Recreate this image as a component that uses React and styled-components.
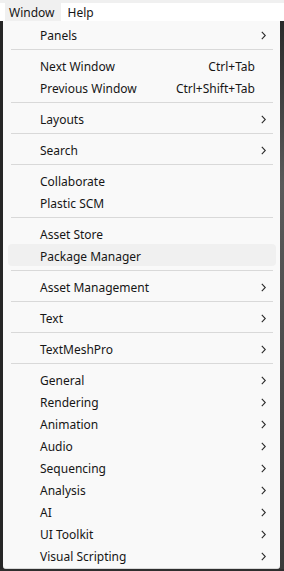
import React from 'react'
import styled, {createGlobalStyle, css} from 'styled-components'

const GlobalStyle = createGlobalStyle`
    html, body {
        margin: 0;
        padding: 0;
        background: #2e2e2e;
    }
    body {
        font-family: "Noto Sans", "Liberation Sans", sans-serif;
        font-size: 12px;
        color: #161616;
    }
`

const Page = styled.div`
    width: 284px;
    height: 571px;
    display: flex;
    flex-direction: column;
    background: #2e2e2e;
    overflow: hidden;
`

const MenuBar = styled.div`
    height: 19px;
    border-top: 3px solid #f0f0f0;
    background: #ffffff;
    display: flex;
    align-items: stretch;
    padding-left: 5px;
`

const MenuTitle = styled.div`
    display: flex;
    align-items: center;
    padding: 1px 6px 0 4px;
    margin-right: 3px;
    ${props => props.active && css`
        background: #f0f0f0;
    `}
`

const DropArea = styled.div`
    flex: 1;
    display: flex;
    align-items: stretch;
    padding-bottom: 2px;
`

const LeftEdge = styled.div`
    width: 3px;
    background: #262626;
`

const RightEdge = styled.div`
    width: 4px;
    background: linear-gradient(180deg, #2a2a2a 0%, #5a5a5a 30%, #4c4c4c 60%, #3a3a3a 100%);
`

const Menu = styled.div`
    flex: 1;
    background: #f9f9f9;
    padding: 2px 0;
    border-bottom: 1px solid #d8d8d8;
    border-bottom-left-radius: 3px;
    border-bottom-right-radius: 3px;
`

const Item = styled.div`
    height: 22px;
    box-sizing: border-box;
    margin: 0 4px 0 5px;
    padding: 2px 10px 0 32px;
    border-radius: 4px;
    display: flex;
    align-items: center;
    ${props => props.hover && css`
        background: #f0f0f0;
    `}
`

const Label = styled.span`
    flex: 1;
    white-space: nowrap;
`

const Shortcut = styled.span`
    margin-right: 6px;
    white-space: nowrap;
`

const Trail = styled.span`
    width: 5px;
    height: 9px;
    display: flex;
    align-items: center;
`

const Separator = styled.div`
    height: 1px;
    margin: 4px 7px 4px 8px;
    background: #d9d9d9;
`

const Chevron = () => (
    <svg width="5" height="9" viewBox="0 0 5 9">
        <path d="M0.8 0.8 L4.3 4.5 L0.8 8.2" fill="none" stroke="#2a2a2a" strokeWidth="1.1" />
    </svg>
)

const groups = [
    [{label: 'Panels', sub: true}],
    [{label: 'Next Window', key: 'Ctrl+Tab'}, {label: 'Previous Window', key: 'Ctrl+Shift+Tab'}],
    [{label: 'Layouts', sub: true}],
    [{label: 'Search', sub: true}],
    [{label: 'Collaborate'}, {label: 'Plastic SCM'}],
    [{label: 'Asset Store'}, {label: 'Package Manager', hover: true}],
    [{label: 'Asset Management', sub: true}],
    [{label: 'Text', sub: true}],
    [{label: 'TextMeshPro', sub: true}],
    [
        {label: 'General', sub: true},
        {label: 'Rendering', sub: true},
        {label: 'Animation', sub: true},
        {label: 'Audio', sub: true},
        {label: 'Sequencing', sub: true},
        {label: 'Analysis', sub: true},
        {label: 'AI', sub: true},
        {label: 'UI Toolkit', sub: true},
        {label: 'Visual Scripting', sub: true},
    ],
]

const App = () => {
    return (
        <Page>
            <GlobalStyle />
            <MenuBar>
                <MenuTitle active>Window</MenuTitle>
                <MenuTitle>Help</MenuTitle>
            </MenuBar>
            <DropArea>
                <LeftEdge />
                <Menu>
                    {groups.map((group, gi) => (
                        <React.Fragment key={gi}>
                            {gi > 0 && <Separator />}
                            {group.map(item => (
                                <Item key={item.label} hover={item.hover}>
                                    <Label>{item.label}</Label>
                                    {item.key && <Shortcut>{item.key}</Shortcut>}
                                    <Trail>{item.sub && <Chevron />}</Trail>
                                </Item>
                            ))}
                        </React.Fragment>
                    ))}
                </Menu>
                <RightEdge />
            </DropArea>
        </Page>
    )
}

export default App
